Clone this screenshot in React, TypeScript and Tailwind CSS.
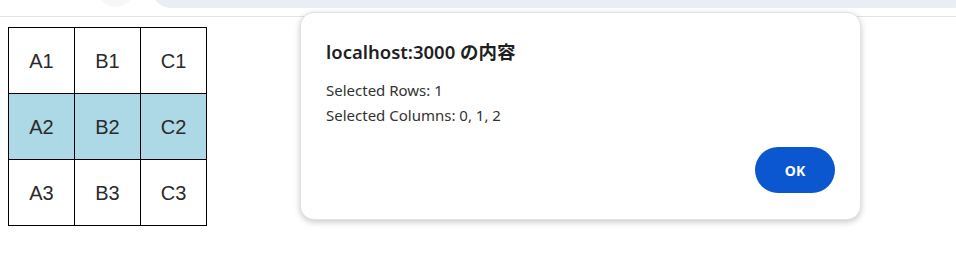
import React from "react";

const rows = [
  ["A1", "B1", "C1"],
  ["A2", "B2", "C2"],
  ["A3", "B3", "C3"],
];

const selectedRow = 1;

export default function App() {
  return (
    <div className="relative h-[265px] w-[956px] overflow-hidden bg-white">
      {/* browser chrome remnant */}
      <div className="relative h-[17px] border-b border-[#e3e3e3]">
        <div className="absolute left-[97px] top-[-30px] h-[37px] w-[37px] rounded-full bg-[#f6f7f9]" />
        <div className="absolute left-[152px] top-[-30px] h-[38px] w-[820px] rounded-full bg-[#e9eef6]" />
      </div>

      <div className="pl-[8px] pt-[10px]">
        <table
          className="border-collapse"
          style={{ fontFamily: '"Liberation Sans", "Noto Sans CJK JP", sans-serif' }}
        >
          <tbody>
            {rows.map((row, i) => (
              <tr key={i} className={i === selectedRow ? "bg-[#add8e6]" : ""}>
                {row.map((cell) => (
                  <td
                    key={cell}
                    className="h-[66px] w-[66px] border border-black p-0 text-center text-[20px] text-[#2a2a2a]"
                  >
                    {cell}
                  </td>
                ))}
              </tr>
            ))}
          </tbody>
        </table>
      </div>

      {/* alert dialog */}
      <div
        className="absolute left-[300px] top-[12px] flex h-[208px] w-[561px] flex-col rounded-[14px] border border-[#e2e2e2] bg-white px-[25px] pb-[26px] pt-[26px] shadow-[0_2px_6px_rgba(0,0,0,0.22)]"
        style={{ fontFamily: '"Noto Sans", "Noto Sans CJK JP", sans-serif' }}
      >
        <div className="text-[18.5px] font-semibold leading-[26px] text-[#1f1f1f]">
          localhost:3000 の内容
        </div>
        <div className="mt-[13px] text-[15px] leading-[25px] text-[#333]">
          <div>Selected Rows: 1</div>
          <div>Selected Columns: 0, 1, 2</div>
        </div>
        <div className="mt-auto flex justify-end">
          <button className="h-[46px] w-[80px] rounded-full bg-[#0b57d0] text-[14px] font-bold text-white">
            OK
          </button>
        </div>
      </div>
    </div>
  );
}
